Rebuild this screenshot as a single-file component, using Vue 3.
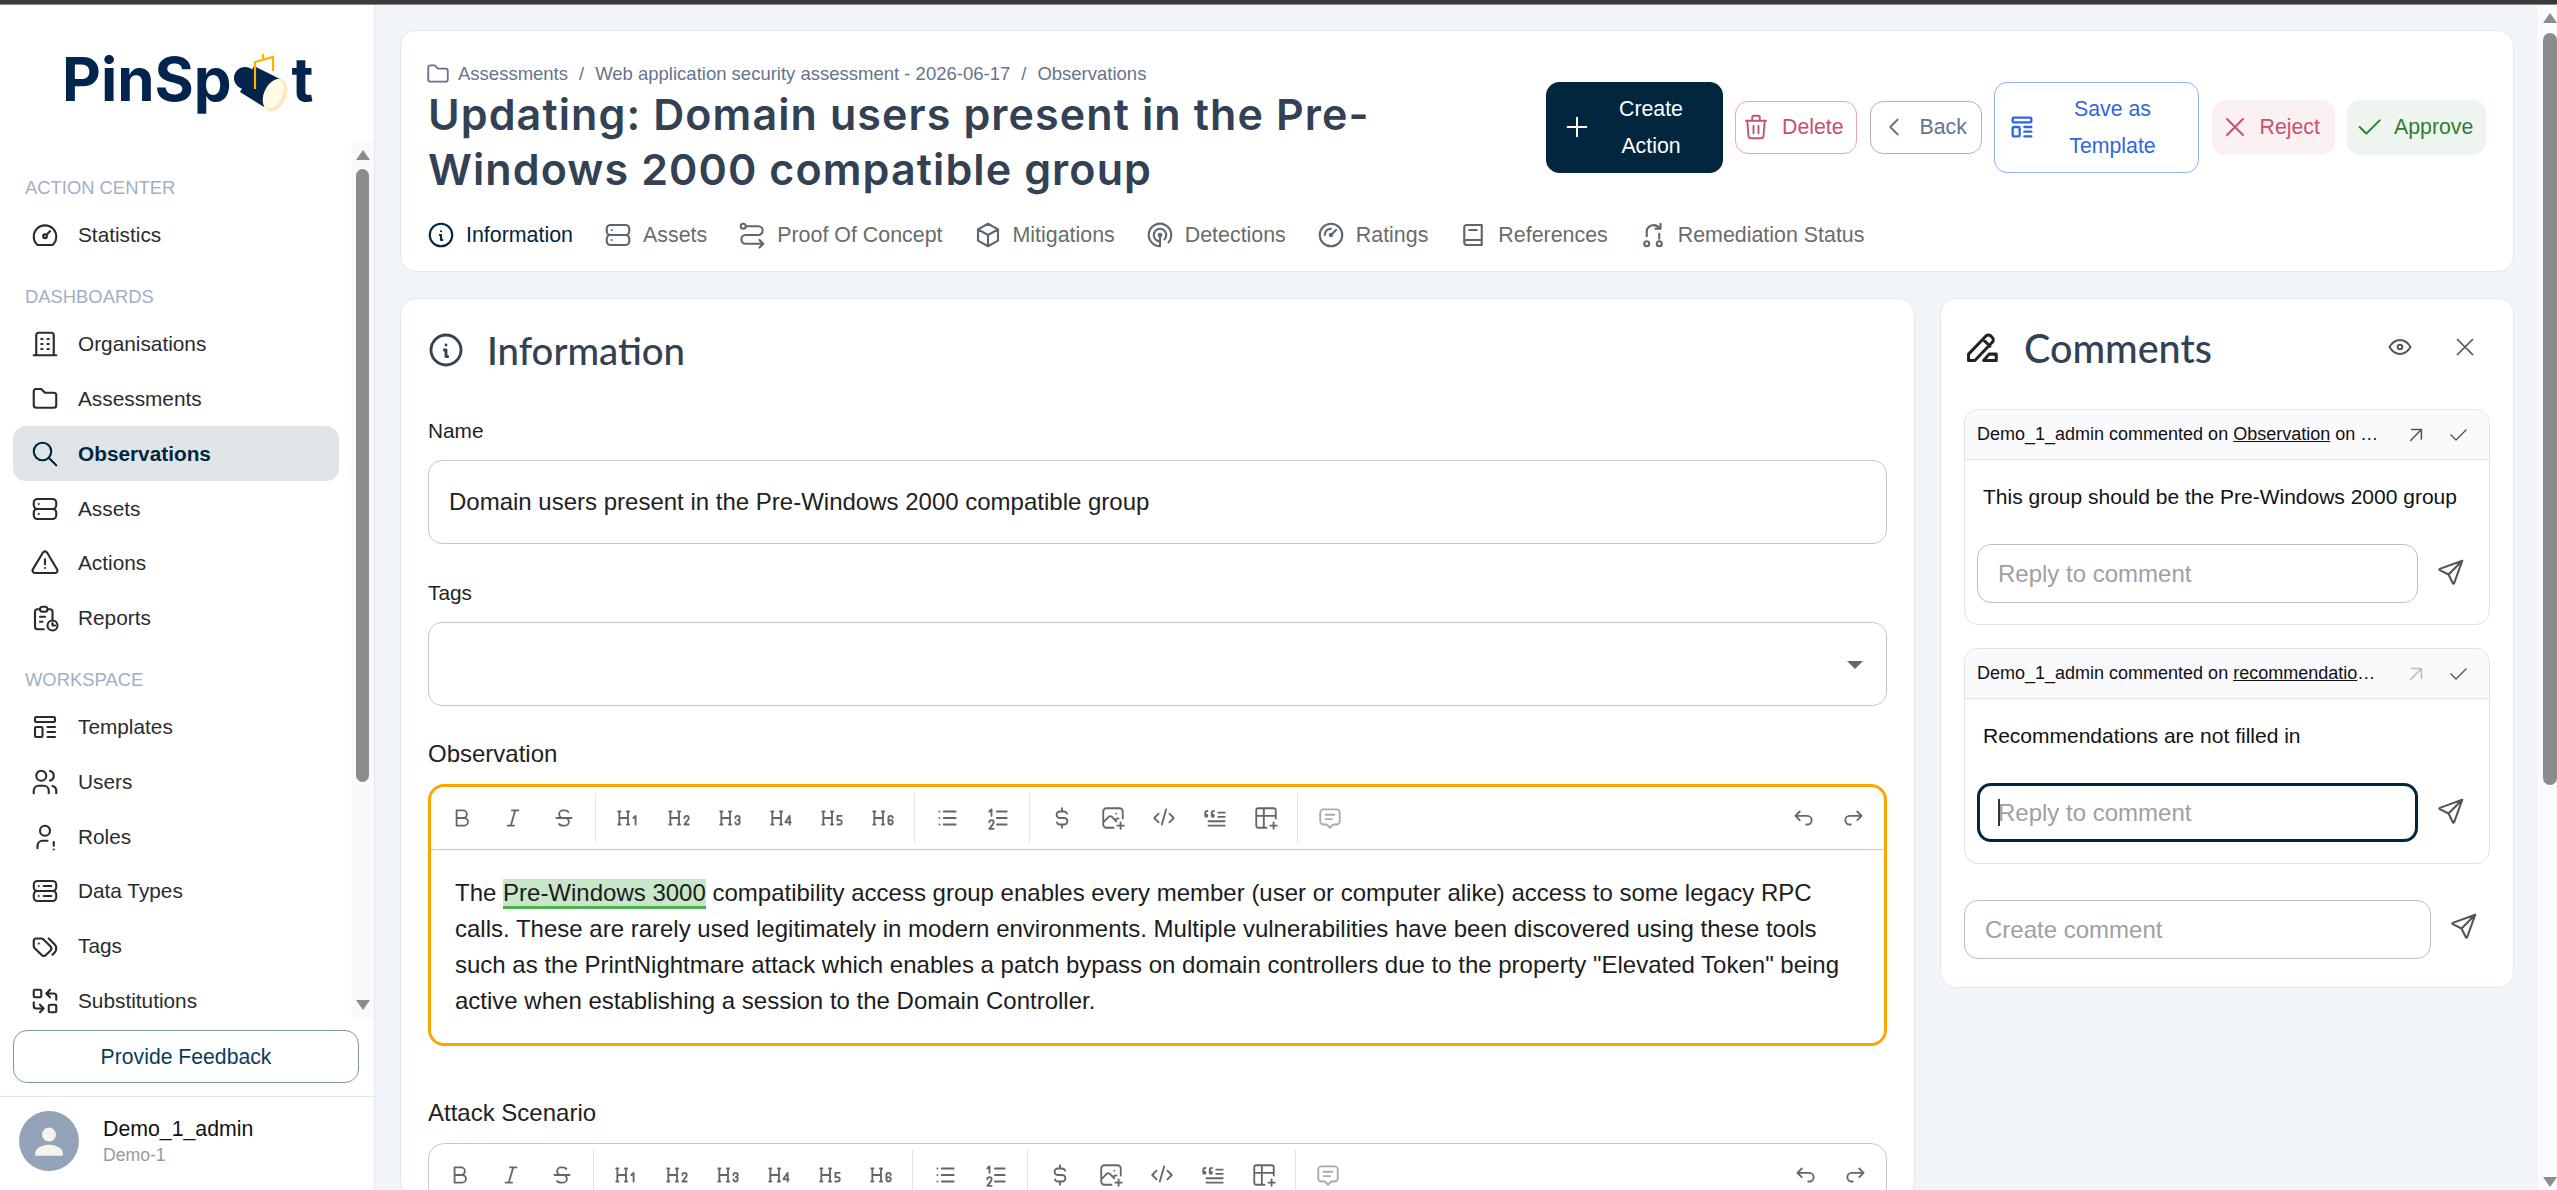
<template>
  <div class="topbar"></div>
  <div class="page">
    <aside class="sidebar">
      <div class="logo">
        <span class="logo-text">PinSp</span>
        <svg class="logo-spot" width="56" height="60" viewBox="0 0 56 60">
          <circle cx="13" cy="25" r="11" fill="#02244d" />
          <path d="M22 13L50 27L32 54L8 39z" fill="#02244d" />
          <ellipse cx="43" cy="42" rx="11" ry="17" transform="rotate(25 43 42)" fill="#fde8c0" />
          <ellipse cx="41.5" cy="41" rx="9" ry="15" transform="rotate(25 41.5 41)" fill="#fffce6" />
          <path d="M23 36V9L41 4V18M31 1v5" fill="none" stroke="#ffb000" stroke-width="2.2" />
        </svg>
        <span class="logo-text">t</span>
      </div>
      <div class="side-scroll">
        <nav class="nav">
          <template v-for="group in navGroups" :key="group.title">
            <div class="nav-title">{{ group.title }}</div>
            <div
              v-for="item in group.items"
              :key="item.label"
              class="nav-item"
              :class="{ active: item.label === 'Observations' }"
            >
              <Icon :name="item.icon" :size="30" />
              <span>{{ item.label }}</span>
            </div>
          </template>
        </nav>
        <div class="side-bar">
          <i class="arrow up"></i>
          <div class="side-thumb"></div>
          <i class="arrow down"></i>
        </div>
      </div>
      <button class="feedback">Provide Feedback</button>
      <div class="user">
        <div class="avatar">
          <svg width="44" height="44" viewBox="0 0 24 24" fill="#f6f3ef">
            <circle cx="12" cy="8.5" r="3.8" />
            <path d="M4.5 18.5c0-3 5-4.4 7.5-4.4s7.5 1.400 7.500 4.400v1.500h-15z" />
          </svg>
        </div>
        <div>
          <div class="user-name">Demo_1_admin</div>
          <div class="user-org">Demo-1</div>
        </div>
      </div>
    </aside>

    <main class="content">
      <section class="card head">
        <div class="head-row">
          <div class="head-text">
            <div class="crumbs">
              <Icon name="folder" :size="26" />
              <span>Assessments</span>
              <span class="sep">/</span>
              <span>Web application security assessment - 2026-06-17</span>
              <span class="sep">/</span>
              <span>Observations</span>
            </div>
            <h1>Updating: Domain users present in the Pre-Windows 2000 compatible group</h1>
          </div>
          <div class="actions">
            <button class="btn btn-create">
              <Icon name="plus" :size="32" />
              <span class="btn-lines">Create<br />Action</span>
            </button>
            <button class="btn btn-delete"><Icon name="trash" :size="30" />Delete</button>
            <button class="btn btn-back"><Icon name="chevron" :size="30" />Back</button>
            <button class="btn btn-save">
              <Icon name="template" :size="28" />
              <span class="btn-lines">Save as<br />Template</span>
            </button>
            <button class="btn btn-reject"><Icon name="x" :size="32" />Reject</button>
            <button class="btn btn-approve"><Icon name="check" :size="32" />Approve</button>
          </div>
        </div>
        <div class="tabs">
          <div v-for="tab in tabs" :key="tab.label" class="tab" :class="{ active: tab.label === 'Information' }">
            <Icon :name="tab.icon" :size="30" />
            <span>{{ tab.label }}</span>
          </div>
        </div>
      </section>

      <div class="columns">
        <section class="card form">
          <div class="form-title">
            <Icon name="info" :size="40" />
            <h2>Information</h2>
          </div>
          <label class="label">Name</label>
          <div class="field">Domain users present in the Pre-Windows 2000 compatible group</div>
          <label class="label">Tags</label>
          <div class="field select"><i class="caret"></i></div>
          <label class="label big">Observation</label>
          <div class="editor focused">
            <div class="toolbar">
              <template v-for="(grp, i) in toolbar" :key="i">
                <span v-if="i > 0" class="divider"></span>
                <span v-for="ic in grp" :key="ic" class="tool" :class="{ dim: ic === 'message' }"><Icon :name="ic" :size="26" /></span>
              </template>
              <span class="tool push"><Icon name="undo" :size="26" /></span>
              <span class="tool"><Icon name="redo" :size="26" /></span>
            </div>
            <p class="editor-text">
              The <mark>Pre-Windows 3000</mark> compatibility access group enables every member (user or computer alike) access to some legacy RPC calls. These are rarely used legitimately in modern environments. Multiple vulnerabilities have been discovered using these tools such as the PrintNightmare attack which enables a patch bypass on domain controllers due to the property "Elevated Token" being active when establishing a session to the Domain Controller.
            </p>
          </div>
          <label class="label big attack">Attack Scenario</label>
          <div class="editor">
            <div class="toolbar">
              <template v-for="(grp, i) in toolbar" :key="i">
                <span v-if="i > 0" class="divider"></span>
                <span v-for="ic in grp" :key="ic" class="tool" :class="{ dim: ic === 'message' }"><Icon :name="ic" :size="26" /></span>
              </template>
              <span class="tool push"><Icon name="undo" :size="26" /></span>
              <span class="tool"><Icon name="redo" :size="26" /></span>
            </div>
          </div>
        </section>

        <section class="card comments">
          <div class="comments-head">
            <Icon class="pen" name="pen" :size="38" />
            <h2>Comments</h2>
            <Icon class="head-icon eye" name="eye" :size="28" />
            <Icon class="head-icon close" name="x" :size="30" />
          </div>

          <div v-for="c in comments" :key="c.target" class="comment">
            <div class="comment-head">
              <span class="comment-by">Demo_1_admin commented on <u>{{ c.target }}</u>{{ c.rest }}</span>
              <Icon class="c-open" :class="{ faded: c.faded }" name="arrow" :size="26" />
              <Icon class="c-check" name="check" :size="24" />
            </div>
            <div class="comment-body">{{ c.text }}</div>
            <div class="reply">
              <div class="reply-box" :class="{ focus: c.focus }">
                <input placeholder="Reply to comment" />
                <i v-if="c.focus" class="cursor"></i>
              </div>
              <Icon class="send" name="send" :size="30" />
            </div>
          </div>

          <div class="create">
            <div class="reply-box">
              <input placeholder="Create comment" />
            </div>
            <Icon class="send" name="send" :size="30" />
          </div>
        </section>
      </div>
    </main>

    <div class="page-bar">
      <i class="arrow up"></i>
      <div class="page-thumb"></div>
      <i class="arrow down"></i>
    </div>
  </div>
</template>

<script setup>
import { h } from "vue";

const headBase = "M4 6v12M12 6v12M11 18h2M3 18h2M4 12h8M3 6h2M11 6h2";

const icons = {
  stats: "M6 20h12a9 9 0 1 0-12 0zM12 13m-1.500 0a1.500 1.500 0 1 0 3 0a1.500 1.500 0 1 0-3 0M13 12l3-3",
  gauge: "M3 12a9 9 0 1 0 18 0a9 9 0 1 0-18 0M11 12a1 1 0 1 0 2 0a1 1 0 1 0-2 0M13.400 10.600L16 8M7 12a5 5 0 0 1 5-5",
  building: "M3 21h18M9 8h1M9 12h1M9 16h1M14 8h1M14 12h1M14 16h1M5 21V5a2 2 0 0 1 2-2h10a2 2 0 0 1 2 2v16",
  folder: "M5 4h4l3 3h7a2 2 0 0 1 2 2v8a2 2 0 0 1-2 2H5a2 2 0 0 1-2-2V6a2 2 0 0 1 2-2",
  search: "M3 10a7 7 0 1 0 14 0a7 7 0 1 0-14 0M21 21l-6-6",
  server: "M3 7a3 3 0 0 1 3-3h12a3 3 0 0 1 3 3v2a3 3 0 0 1-3 3H6a3 3 0 0 1-3-3zM3 15a3 3 0 0 1 3-3h12a3 3 0 0 1 3 3v2a3 3 0 0 1-3 3H6a3 3 0 0 1-3-3zM7 8v.01M7 16v.01",
  database: "M3 7a3 3 0 0 1 3-3h12a3 3 0 0 1 3 3v2a3 3 0 0 1-3 3H6a3 3 0 0 1-3-3zM3 15a3 3 0 0 1 3-3h12a3 3 0 0 1 3 3v2a3 3 0 0 1-3 3H6a3 3 0 0 1-3-3zM7 8h.01M11 8h6M7 16h.01M11 16h6",
  alert: "M12 9v4M10.363 3.591l-8.106 13.534a1.914 1.914 0 0 0 1.636 2.871h16.214a1.914 1.914 0 0 0 1.636-2.870L13.637 3.590a1.914 1.914 0 0 0-3.274 0zM12 16h.01",
  report: "M8 5H6a2 2 0 0 0-2 2v12a2 2 0 0 0 2 2h5M18 13V7a2 2 0 0 0-2-2h-2M8 5a2 2 0 0 1 2-2h2a2 2 0 0 1 2 2a2 2 0 0 1-2 2h-2a2 2 0 0 1-2-2M8 11h4M8 15h2M14 18a4 4 0 1 0 8 0a4 4 0 1 0-8 0M18 16v2h2",
  template: "M4 5a1 1 0 0 1 1-1h14a1 1 0 0 1 1 1v2a1 1 0 0 1-1 1H5a1 1 0 0 1-1-1zM4 13a1 1 0 0 1 1-1h4a1 1 0 0 1 1 1v6a1 1 0 0 1-1 1H5a1 1 0 0 1-1-1zM14 12h6M14 16h6M14 20h6",
  users: "M5 7a4 4 0 1 0 8 0a4 4 0 1 0-8 0M3 21v-2a4 4 0 0 1 4-4h4a4 4 0 0 1 4 4v2M16 3.130a4 4 0 0 1 0 7.750M21 21v-2a4 4 0 0 0-3-3.850",
  role: "M8 7a4 4 0 1 0 8 0a4 4 0 1 0-8 0M6 21v-2a4 4 0 0 1 4-4h4M19 16v3M19 22v.01",
  tags: "M3 8v4.172a2 2 0 0 0 .586 1.414l5.710 5.710a2.410 2.410 0 0 0 3.408 0l3.592-3.592a2.410 2.410 0 0 0 0-3.408l-5.710-5.710A2 2 0 0 0 9.172 6H5a2 2 0 0 0-2 2zM18 19l1.592-1.592a4.820 4.820 0 0 0 0-6.816L15 6M7 10h-.01",
  swap: "M3 4a1 1 0 0 1 1-1h4a1 1 0 0 1 1 1v4a1 1 0 0 1-1 1H4a1 1 0 0 1-1-1zM15 16a1 1 0 0 1 1-1h4a1 1 0 0 1 1 1v4a1 1 0 0 1-1 1h-4a1 1 0 0 1-1-1zM21 11V8a2 2 0 0 0-2-2h-6l3 3m0-6l-3 3M3 13v3a2 2 0 0 0 2 2h6l-3-3m0 6l3-3",
  info: "M3 12a9 9 0 1 0 18 0a9 9 0 0 0-18 0M12 9h.01M11 12h1v4h1",
  route: "M3 5a2 2 0 1 0 4 0a2 2 0 1 0-4 0M7 5h10a3.500 3.500 0 0 1 0 7H7a3.500 3.500 0 0 0 0 7h14M18 16l3 3-3 3",
  box: "M12 3l8 4.500v9L12 21l-8-4.500v-9L12 3M12 12l8-4.500M12 12v9M12 12L4 7.500",
  radar: "M11 12a1 1 0 1 0 2 0a1 1 0 1 0-2 0M15.510 15.560a5 5 0 1 0-3.510 1.440M18.832 17.860a9 9 0 1 0-6.832 3.140M12 12v9",
  book: "M19 4v16H7a2 2 0 0 1-2-2V6a2 2 0 0 1 2-2h12zM19 16H7a2 2 0 0 0-2 2M9 8h6",
  remediate: "M7 13V10a5.500 5.500 0 0 1 10-3.500M18 3v4h-4M5 19a2 2 0 1 0 4 0a2 2 0 1 0-4 0M15 19a2 2 0 1 0 4 0a2 2 0 1 0-4 0M17 11v4",
  plus: "M12 5v14M5 12h14",
  trash: "M4 7h16M10 11v6M14 11v6M5 7l1 12a2 2 0 0 0 2 2h8a2 2 0 0 0 2-2l1-12M9 7V4a1 1 0 0 1 1-1h4a1 1 0 0 1 1 1v3",
  chevron: "M15 6l-6 6 6 6",
  x: "M18 6L6 18M6 6l12 12",
  check: "M5 12l5 5L20 7",
  eye: "M10 12a2 2 0 1 0 4 0a2 2 0 0 0-4 0M21 12c-2.400 4-5.400 6-9 6s-6.600-2-9-6c2.400-4 5.400-6 9-6s6.600 2 9 6",
  pen: "M3.500 20.500v-4L14.500 5a2.100 2.100 0 0 1 3 0l1 1a2.100 2.100 0 0 1 0 3L7.500 20.500zM12.500 7l4.500 4.500M13 20.500h8v-4h-4.500z",
  arrow: "M17 7L7 17M8 7h9v9",
  send: "M10 14L21 3M21 3l-6.500 18a.550 .550 0 0 1-1 0L10 14l-7-3.500a.550 .550 0 0 1 0-1L21 3",
  bold: "M7 5h6a3.500 3.500 0 0 1 0 7H7zM13 12h1a3.500 3.500 0 0 1 0 7H7v-7",
  italic: "M11 5h6M7 19h6M14 5l-4 14",
  strike: "M5 12h14M16 6.500A4 2 0 0 0 12 5h-1a3.500 3.500 0 0 0 0 7h2a3.500 3.500 0 0 1 0 7h-1.500a4 2 0 0 1-4-1.500",
  h1: headBase + "M19 18v-8l-2 2",
  h2: headBase + "M17 12a2 2 0 1 1 4 0c0 .591-.417 1.318-.816 1.858L17 18h4",
  h3: headBase + "M19 14a2 2 0 1 0-2-2M17 16a2 2 0 1 0 2-2",
  h4: headBase + "M20 18v-8l-4 6h5",
  h5: headBase + "M17 18h2a2 2 0 1 0 0-4h-2v-4h4",
  h6: headBase + "M19 14a2 2 0 1 0 0 4a2 2 0 0 0 0-4zM21 12a2 2 0 0 0-2-2a2 2 0 0 0-2 2v4",
  list: "M9 6h11M9 12h11M9 18h11M5 6v.01M5 12v.01M5 18v.01",
  numbers: "M11 6h9M11 12h9M11 18h9M4 16a2 2 0 1 1 4 0c0 .591-.417 1.318-.816 1.858L4 22h4M6 10V4L4 6",
  dollar: "M16.700 8A3 3 0 0 0 14 6h-4a3 3 0 0 0 0 6h4a3 3 0 0 1 0 6h-4a3 3 0 0 1-2.700-2M12 3v3m0 12v3",
  image: "M15 8h.01M12.500 21H6a3 3 0 0 1-3-3V6a3 3 0 0 1 3-3h12a3 3 0 0 1 3 3v6.500M3 16l5-5c.928-.893 2.072-.893 3 0l4 4M14 14l1-1c.670-.644 1.450-.824 2.182-.540M16 19h6M19 16v6",
  code: "M7 8l-4 4 4 4M17 8l4 4-4 4M14 4l-4 14",
  quote: "M6 15h15M21 19H6M15 11h6M21 7h-6M9 9h1a1 1 0 1 1-1 1V7.500a2 2 0 0 1 2-2M3 9h1a1 1 0 1 1-1 1V7.500a2 2 0 0 1 2-2",
  table: "M12.500 21H5a2 2 0 0 1-2-2V5a2 2 0 0 1 2-2h14a2 2 0 0 1 2 2v7.500M3 10h18M10 3v18M16 19h6M19 16v6",
  message: "M8 9h8M8 13h6M9 18H6a3 3 0 0 1-3-3V7a3 3 0 0 1 3-3h12a3 3 0 0 1 3 3v8a3 3 0 0 1-3 3h-3l-3 3-3-3z",
  undo: "M9 14l-4-4 4-4M5 10h11a4 4 0 1 1 0 8h-1",
  redo: "M15 14l4-4-4-4M19 10H8a4 4 0 1 0 0 8h1",
};

const Icon = (props) =>
  h(
    "svg",
    {
      class: "icon",
      width: props.size,
      height: props.size,
      viewBox: "0 0 24 24",
      fill: "none",
      stroke: "currentColor",
      "stroke-width": 1.7,
      "stroke-linecap": "round",
      "stroke-linejoin": "round",
    },
    [h("path", { d: icons[props.name] })]
  );
Icon.props = ["name", "size"];

const navGroups = [
  { title: "ACTION CENTER", items: [{ label: "Statistics", icon: "stats" }] },
  {
    title: "DASHBOARDS",
    items: [
      { label: "Organisations", icon: "building" },
      { label: "Assessments", icon: "folder" },
      { label: "Observations", icon: "search" },
      { label: "Assets", icon: "server" },
      { label: "Actions", icon: "alert" },
      { label: "Reports", icon: "report" },
    ],
  },
  {
    title: "WORKSPACE",
    items: [
      { label: "Templates", icon: "template" },
      { label: "Users", icon: "users" },
      { label: "Roles", icon: "role" },
      { label: "Data Types", icon: "database" },
      { label: "Tags", icon: "tags" },
      { label: "Substitutions", icon: "swap" },
    ],
  },
];

const tabs = [
  { label: "Information", icon: "info" },
  { label: "Assets", icon: "server" },
  { label: "Proof Of Concept", icon: "route" },
  { label: "Mitigations", icon: "box" },
  { label: "Detections", icon: "radar" },
  { label: "Ratings", icon: "gauge" },
  { label: "References", icon: "book" },
  { label: "Remediation Status", icon: "remediate" },
];

const toolbar = [
  ["bold", "italic", "strike"],
  ["h1", "h2", "h3", "h4", "h5", "h6"],
  ["list", "numbers"],
  ["dollar", "image", "code", "quote", "table"],
  ["message"],
];

const comments = [
  { target: "Observation", rest: " on 2026-06-17 at 10:42", text: "This group should be the Pre-Windows 2000 group" },
  { target: "recommendations", rest: " on 2026-06-17", text: "Recommendations are not filled in", faded: true, focus: true },
];
</script>

<style>
html,
body {
  margin: 0;
  height: 100%;
  overflow: hidden;
}
</style>

<style scoped>
.icon {
  flex: none;
  display: block;
}
.topbar {
  height: 4px;
  background: #3a3a3a;
  border-bottom: 1px solid #8a8a8a;
}
.page {
  display: flex;
  height: 1185px;
  overflow: hidden;
  background: #f1f5f9;
  font-family: "Liberation Sans", Arial, sans-serif;
  color: #222;
}

/* sidebar */
.sidebar {
  flex: none;
  width: 374px;
  display: flex;
  flex-direction: column;
  background: #fff;
  border-right: 1px solid #e2e8f0;
}
.logo {
  height: 137px;
  display: flex;
  align-items: flex-start;
  padding: 38px 0 0 62px;
  box-sizing: border-box;
}
.logo-text {
  font-family: Inter, sans-serif;
  font-weight: 650;
  font-size: 60px;
  line-height: 72px;
  color: #02244d;
}
.logo-spot {
  margin: 10px 4px 0 0;
}
.side-scroll {
  flex: none;
  height: 876px;
  display: flex;
  overflow: hidden;
}
.nav {
  flex: none;
  width: 351px;
  padding: 32px 12px 0 13px;
  box-sizing: border-box;
}
.nav-title {
  height: 27px;
  line-height: 27px;
  margin: 20px 0 7px 12px;
  font-size: 18.400px;
  color: #9fb0c8;
}
.nav-title:first-child {
  margin-top: 0;
}
.nav-item {
  height: 54.8px;
  display: flex;
  align-items: center;
  gap: 18px;
  padding-left: 17px;
  font-size: 20.800px;
  color: #2b2b2b;
  border-radius: 13px;
}
.nav-item.active {
  background: #dfe4e7;
  color: #03263f;
  font-weight: 700;
}
.side-bar {
  flex: none;
  width: 23px;
  background: #fafafa;
  display: flex;
  flex-direction: column;
  align-items: center;
}
.arrow {
  display: block;
  width: 0;
  height: 0;
  border-left: 7px solid transparent;
  border-right: 7px solid transparent;
}
.arrow.up {
  border-bottom: 10px solid #8c8c8c;
}
.arrow.down {
  border-top: 10px solid #8c8c8c;
}
.side-bar .arrow.up {
  margin-top: 8px;
}
.side-thumb {
  width: 13px;
  height: 613px;
  margin-top: 9px;
  background: #8c8c8c;
  border-radius: 7px;
}
.side-bar .arrow.down {
  margin-top: auto;
  margin-bottom: 8px;
}
.feedback {
  flex: none;
  width: 346px;
  height: 53px;
  margin: 12px 0 13px 13px;
  background: #fff;
  border: 1px solid #7f97ad;
  border-radius: 14px;
  font: 21.200px "Liberation Sans", Arial, sans-serif;
  color: #0b3c5d;
}
.user {
  flex: 1;
  display: flex;
  align-items: center;
  gap: 24px;
  padding: 0 0 6px 19px;
  border-top: 1px solid #e2e8f0;
}
.avatar {
  width: 60px;
  height: 60px;
  border-radius: 50%;
  background: #94a3b8;
  display: flex;
  align-items: center;
  justify-content: center;
}
.user-name {
  font-size: 21.300px;
  color: #111;
  line-height: 28px;
  padding-top: 1px;
}
.user-org {
  font-size: 17.600px;
  color: #999;
  line-height: 25px;
}

/* content */
.content {
  flex: 1;
  min-width: 0;
  padding: 25px 24px 0 25px;
}
.card {
  background: #fff;
  border: 1px solid #e2e8f0;
  border-radius: 16px;
  box-sizing: border-box;
}
.head {
  height: 242px;
  padding: 29px 27px 0 27px;
}
.head-row {
  display: flex;
  align-items: center;
  justify-content: space-between;
  height: 137px;
}
.head-text {
  width: 1060px;
}
.crumbs {
  display: flex;
  align-items: center;
  gap: 7px;
  margin-left: -3px;
  font-size: 18.500px;
  color: #64748b;
  line-height: 26px;
}
.crumbs .sep {
  margin: 0 4px;
}
h1 {
  margin: 0;
  font-family: Inter, sans-serif;
  font-size: 43px;
  font-weight: 560;
  letter-spacing: 1.100px;
  line-height: 55px;
  color: #334155;
}
.actions {
  display: flex;
  align-items: center;
  gap: 12.500px;
  margin: -3px 0 0 0;
}
.btn {
  display: flex;
  align-items: center;
  gap: 11px;
  height: 53px;
  padding: 0;
  font: 21.300px/37px "Liberation Sans", Arial, sans-serif;
  background: #fff;
  border: 1px solid;
  border-radius: 13px;
  box-sizing: border-box;
}
.btn .icon {
  stroke-width: 1.5;
}
.btn-lines {
  flex: 1;
  text-align: center;
  padding-top: 2px;
}
.btn-create {
  width: 177px;
  height: 91px;
  padding: 0 12px 0 14px;
  gap: 0;
  background: #03263f;
  border-color: #03263f;
  color: #fff;
}
.btn-delete {
  width: 122px;
  padding-left: 5px;
  color: #c9506f;
  border-color: #e7a5b6;
}
.btn-back {
  width: 112px;
  padding-left: 8px;
  color: #64748b;
  border-color: #aab4c4;
}
.btn-save {
  width: 205px;
  height: 91px;
  padding: 0 9px 0 13px;
  gap: 0;
  color: #2f67e0;
  border-color: #94b4ef;
}
.btn-save .icon {
  stroke-width: 2;
}
.btn-reject {
  width: 123px;
  height: 55px;
  padding-left: 6px;
  gap: 9px;
  color: #c9506f;
  background: #fbf1f3;
  border-color: #fbf1f3;
}
.btn-approve {
  width: 139px;
  height: 55px;
  padding-left: 5px;
  gap: 9px;
  color: #2e7d32;
  background: #eef5ee;
  border-color: #eef5ee;
}
.tabs {
  display: flex;
  gap: 30px;
  margin: 20px 0 0 -2px;
}
.tab {
  display: flex;
  align-items: center;
  gap: 10px;
  height: 36px;
  font-size: 21.400px;
  color: #6b6b6b;
}
.tab.active {
  color: #03263f;
}
.tab .icon {
  color: #5d6770;
}
.tab.active .icon {
  color: #03263f;
}

.columns {
  display: flex;
  align-items: flex-start;
  gap: 25px;
  margin-top: 26px;
}
.form {
  flex: none;
  width: 1515px;
  height: 900px;
  padding: 0 27px;
}
.form-title {
  display: flex;
  align-items: center;
  gap: 21px;
  height: 102px;
  margin-bottom: 16px;
  color: #334155;
}
.form-title .icon {
  margin-left: -2px;
}
h2 {
  margin: 0;
  font-family: Lato, sans-serif;
  font-weight: 500;
  font-size: 38.300px;
  color: #334155;
}
.label {
  display: block;
  height: 27px;
  line-height: 27px;
  font-size: 20.800px;
  color: #222;
}
.label.big {
  font-size: 24px;
}
.field {
  height: 84px;
  margin: 15.500px 0 35.500px;
  padding: 0 20px;
  display: flex;
  align-items: center;
  border: 1px solid #c8c8c8;
  border-radius: 14px;
  box-sizing: border-box;
  font-size: 24px;
  color: #222;
  position: relative;
}
.field.select {
  margin-bottom: 34px;
}
.caret {
  position: absolute;
  right: 23px;
  top: 38px;
  border-left: 8px solid transparent;
  border-right: 8px solid transparent;
  border-top: 8px solid #666;
}
.editor {
  margin-top: 17.500px;
  border: 1px solid #c8c8c8;
  border-radius: 16px;
  box-sizing: border-box;
}
.editor.focused {
  height: 262px;
  border: 3px solid #ffa500;
}
.toolbar {
  height: 62px;
  padding: 0 5px;
  display: flex;
  align-items: center;
  border-bottom: 1px solid #c8c8c8;
  color: #666;
}
.tool {
  width: 51px;
  display: flex;
  justify-content: center;
}
.tool.dim {
  color: #aaa;
}
.tool.push {
  margin-left: auto;
}
.divider {
  width: 1px;
  height: 50px;
  margin: 0 6px;
  background: #e3e3e3;
}
.editor-text {
  margin: 0;
  padding: 25px 24px 0;
  font-size: 24px;
  line-height: 36px;
  color: #1c1c1c;
}
mark {
  background: #c8e6c9;
  color: inherit;
  border-bottom: 3px solid #4caf50;
}
.label.attack {
  margin-top: 52.500px;
}

/* comments */
.comments {
  flex: none;
  width: 574px;
  height: 690px;
  padding: 0 23px;
}
.comments-head {
  display: flex;
  align-items: center;
  height: 96px;
  margin-bottom: 14px;
  color: #555;
}
.comments-head .pen {
  margin-left: -1px;
  color: #222;
  stroke-width: 1.9;
}
.comments-head h2 {
  flex: 1;
  margin-left: 23px;
  font-size: 39.500px;
}
.head-icon.eye {
  margin-right: 36px;
}
.head-icon.close {
  margin-right: 10px;
  stroke-width: 1.4;
}
.comment {
  border: 1px solid #e2e2e8;
  border-radius: 14px;
  height: 214px;
  margin-bottom: 23px;
}
.comment-head {
  height: 50px;
  display: flex;
  align-items: center;
  padding: 0 0 0 12px;
  background: #fafafc;
  border-bottom: 1px solid #e2e2e8;
  border-radius: 14px 14px 0 0;
  box-sizing: border-box;
  color: #555;
}
.comment-by {
  width: 405px;
  flex: none;
  font-size: 18px;
  color: #111;
  white-space: nowrap;
  overflow: hidden;
  text-overflow: ellipsis;
}
.c-open {
  margin-left: 21px;
  stroke-width: 1.4;
}
.c-open.faded {
  color: #bbb;
}
.c-check {
  margin-left: 17px;
  stroke-width: 1.4;
}
.comment-body {
  height: 33px;
  line-height: 33px;
  margin: 20px 0 31px 18px;
  font-size: 21px;
  color: #111;
}
.reply {
  display: flex;
  align-items: flex-start;
  padding-left: 12px;
}
.reply-box {
  flex: none;
  width: 441px;
  height: 59px;
  border: 1px solid #bdbdbd;
  border-radius: 14px;
  box-sizing: border-box;
  position: relative;
}
.reply-box.focus {
  border: 3px solid #03263f;
}
.reply-box input {
  width: 100%;
  height: 100%;
  padding: 0 20px;
  border: none;
  outline: none;
  background: transparent;
  box-sizing: border-box;
  font: 24px "Liberation Sans", Arial, sans-serif;
}
.reply-box.focus input {
  padding-left: 18px;
}
.reply-box input::placeholder {
  color: #a0a0a0;
}
.cursor {
  position: absolute;
  left: 18px;
  top: 13px;
  width: 2px;
  height: 27px;
  background: #333;
}
.send {
  margin: 13px 0 0 18px;
  color: #555;
}
.create {
  display: flex;
  align-items: flex-start;
  margin-top: 36px;
}
.create .reply-box {
  width: 467px;
}
.create .send {
  margin-top: 11px;
}

/* page scrollbar */
.page-bar {
  flex: none;
  width: 19px;
  padding-left: 4px;
  box-sizing: border-box;
  background: #fbfbfb;
  display: flex;
  flex-direction: column;
  align-items: center;
}
.page-bar .arrow.up {
  margin-top: 8px;
}
.page-thumb {
  width: 14px;
  height: 752px;
  margin-top: 10px;
  background: #8c8c8c;
  border-radius: 7px;
}
.page-bar .arrow.down {
  margin-top: auto;
  margin-bottom: 3px;
}
</style>
